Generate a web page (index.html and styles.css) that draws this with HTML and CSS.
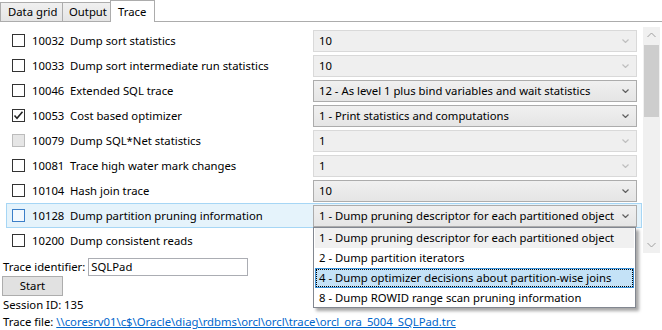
FILE: index.html
```html
<!DOCTYPE html>
<html>
    <head lang="en">
        <meta charset="UTF-8">
        <title>Trace</title>
        <link rel="stylesheet" href="styles.css">
    </head>
    <body>
    <div id="tabs">
        <div class="tab tab-data">Data grid</div>
        <div class="tab tab-output">Output</div>
        <div class="tab tab-trace selected">Trace</div>
        <div class="tab-fill"></div>
    </div>
    <div id="panel">
        <div id="events">
            <div id="list">
                <div class="row">
                    <span class="check"></span><span class="code">10032</span><span class="name">Dump sort statistics</span>
                    <div class="combo off"><span>10</span><svg width="7" height="4" viewBox="0 0 7 4"><path d="M0.5 0.5 L3.5 3.5 L6.5 0.5"/></svg></div>
                </div>
                <div class="row">
                    <span class="check"></span><span class="code">10033</span><span class="name">Dump sort intermediate run statistics</span>
                    <div class="combo off"><span>10</span><svg width="7" height="4" viewBox="0 0 7 4"><path d="M0.5 0.5 L3.5 3.5 L6.5 0.5"/></svg></div>
                </div>
                <div class="row">
                    <span class="check"></span><span class="code">10046</span><span class="name">Extended SQL trace</span>
                    <div class="combo"><span>12 - As level 1 plus bind variables and wait statistics</span><svg width="7" height="4" viewBox="0 0 7 4"><path d="M0.5 0.5 L3.5 3.5 L6.5 0.5"/></svg></div>
                </div>
                <div class="row">
                    <span class="check"><svg width="11" height="11" viewBox="0 0 11 11"><path d="M1.5 5.5 L4 8.2 L9.5 1.8"/></svg></span><span class="code">10053</span><span class="name">Cost based optimizer</span>
                    <div class="combo"><span>1 - Print statistics and computations</span><svg width="7" height="4" viewBox="0 0 7 4"><path d="M0.5 0.5 L3.5 3.5 L6.5 0.5"/></svg></div>
                </div>
                <div class="row">
                    <span class="check dim"></span><span class="code">10079</span><span class="name">Dump SQL*Net statistics</span>
                    <div class="combo off"><span>1</span><svg width="7" height="4" viewBox="0 0 7 4"><path d="M0.5 0.5 L3.5 3.5 L6.5 0.5"/></svg></div>
                </div>
                <div class="row">
                    <span class="check"></span><span class="code">10081</span><span class="name">Trace high water mark changes</span>
                    <div class="combo off"><span>1</span><svg width="7" height="4" viewBox="0 0 7 4"><path d="M0.5 0.5 L3.5 3.5 L6.5 0.5"/></svg></div>
                </div>
                <div class="row">
                    <span class="check"></span><span class="code">10104</span><span class="name">Hash join trace</span>
                    <div class="combo"><span>10</span><svg width="7" height="4" viewBox="0 0 7 4"><path d="M0.5 0.5 L3.5 3.5 L6.5 0.5"/></svg></div>
                </div>
                <div class="row hover">
                    <span class="check"></span><span class="code">10128</span><span class="name">Dump partition pruning information</span>
                    <div class="combo"><span>1 - Dump pruning descriptor for each partitioned object</span><svg width="7" height="4" viewBox="0 0 7 4"><path d="M0.5 0.5 L3.5 3.5 L6.5 0.5"/></svg></div>
                </div>
                <div class="row">
                    <span class="check"></span><span class="code">10200</span><span class="name">Dump consistent reads</span>
                </div>
            </div>
            <div id="scrollbar">
                <svg class="arrow" width="17" height="17" viewBox="0 0 17 17"><path d="M4.5 10 L8.5 6 L12.5 10"/></svg>
                <div class="track"><div class="thumb"></div></div>
                <svg class="arrow" width="17" height="17" viewBox="0 0 17 17"><path d="M4.5 7 L8.5 11 L12.5 7"/></svg>
            </div>
        </div>
        <div id="form">
            <div class="ident">
                <span>Trace identifier:</span>
                <div class="input">SQLPad</div>
            </div>
            <div class="button">Start</div>
            <div class="line">Session ID: 135</div>
            <div class="line">Trace file: <a href="#">\\coresrv01\c$\Oracle\diag\rdbms\orcl\orcl\trace\orcl_ora_5004_SQLPad.trc</a></div>
        </div>
        <ul id="dropdown">
            <li class="current">1 - Dump pruning descriptor for each partitioned object</li>
            <li>2 - Dump partition iterators</li>
            <li class="selected">4 - Dump optimizer decisions about partition-wise joins</li>
            <li>8 - Dump ROWID range scan pruning information</li>
        </ul>
    </div>
    </body>
</html>
```

FILE: styles.css
```css
*{
    margin:0;
    padding:0;
    box-sizing:border-box;
}
ul,ol{
    list-style:none;
}
body{
    width:662px;
    height:330px;
    overflow:hidden;
    background:#fff;
    font-family:"Segoe UI","Noto Sans",sans-serif;
    font-size:11.3px;
    color:#000;
    position:relative;
    white-space:nowrap;
}
#tabs{
    display:flex;
    height:22px;
}
.tab{
    height:20px;
    margin-top:2px;
    background:linear-gradient(#f0f0f0,#e5e5e5);
    border:1px solid #acacac;
    margin-right:-1px;
    line-height:17px;
    padding-left:7px;
}
.tab-data{
    width:63px;
}
.tab-output{
    width:49px;
    padding-left:6px;
}
.tab.selected{
    width:45px;
    height:22px;
    margin-top:0;
    background:#fff;
    border-color:#acacac;
    border-bottom:none;
    line-height:21px;
    padding-left:7px;
    position:relative;
}
.tab-fill{
    flex:1;
    border-bottom:1px solid #acacac;
}
#panel{
    position:relative;
}
#events{
    display:flex;
    padding-top:5px;
    height:231px;
}
#list{
    width:636px;
    margin-left:6px;
    padding-top:1px;
}
.row{
    height:25px;
    display:flex;
    align-items:center;
    padding-left:5px;
    border:1px solid transparent;
}
.row.hover{
    background:#e5f3fb;
    border-color:#a6d6f5;
}
.check{
    width:13px;
    height:13px;
    border:1px solid #333;
    background:#fff;
    display:flex;
    align-items:center;
    justify-content:center;
    margin-right:7px;
}
.check.dim{
    background:#e6e6e6;
    border-color:#bcbcbc;
}
.row.hover .check{
    border-color:#3c7fc8;
    background:#f3f9fe;
}
.check svg path{
    fill:none;
    stroke:#222;
    stroke-width:1.6;
}
.code{
    width:38px;
}
.name{
    flex:1;
}
.combo{
    width:324px;
    height:22px;
    margin-right:4px;
    border:1px solid #acacac;
    background:linear-gradient(#f0f0f0,#e5e5e5);
    display:flex;
    align-items:center;
    justify-content:space-between;
    padding:0 7px 0 5px;
}
.combo svg path{
    fill:none;
    stroke:#606060;
    stroke-width:1.2;
}
.combo.off{
    background:#efefef;
    border-color:#d9d9d9;
}
.combo.off svg path{
    stroke:#bfbfbf;
}
#scrollbar{
    width:17px;
    margin-left:1px;
    background:#f0f0f0;
    display:flex;
    flex-direction:column;
}
#scrollbar .arrow path{
    fill:none;
    stroke:#a0a0a0;
    stroke-width:1;
}
#scrollbar .track{
    flex:1;
    padding-top:1px;
}
#scrollbar .thumb{
    height:72px;
    margin:0 1px;
    background:#cdcdcd;
}
#form{
    padding:4px 0 0 2px;
}
.ident{
    display:flex;
    align-items:center;
    height:19px;
}
.ident span{
    margin-left:1px;
    margin-right:3px;
}
.input{
    width:160px;
    height:18px;
    border:1px solid #abadb3;
    padding-left:2px;
    line-height:16px;
}
.button{
    width:61px;
    height:20px;
    background:#e1e1e1;
    border:1px solid #adadad;
    text-align:center;
    line-height:18px;
}
.line{
    height:17px;
    line-height:17px;
    padding-left:1px;
}
.line a{
    color:#0066cc;
}
#dropdown{
    position:absolute;
    left:313px;
    top:205px;
    width:323px;
    height:81px;
    border:1px solid #828790;
    background:#fff;
    box-shadow:3px 3px 3px rgba(0,0,0,0.35);
    padding:0 1px;
}
#dropdown li{
    height:20px;
    line-height:19px;
    padding-left:4px;
}
#dropdown li.current{
    background:#f0f0f0;
}
#dropdown li.selected{
    background:#c4e2f7;
    border:1px solid #3d93d9;
    outline:1px dotted #000;
    outline-offset:-2px;
    line-height:17px;
    padding-left:3px;
}
```
